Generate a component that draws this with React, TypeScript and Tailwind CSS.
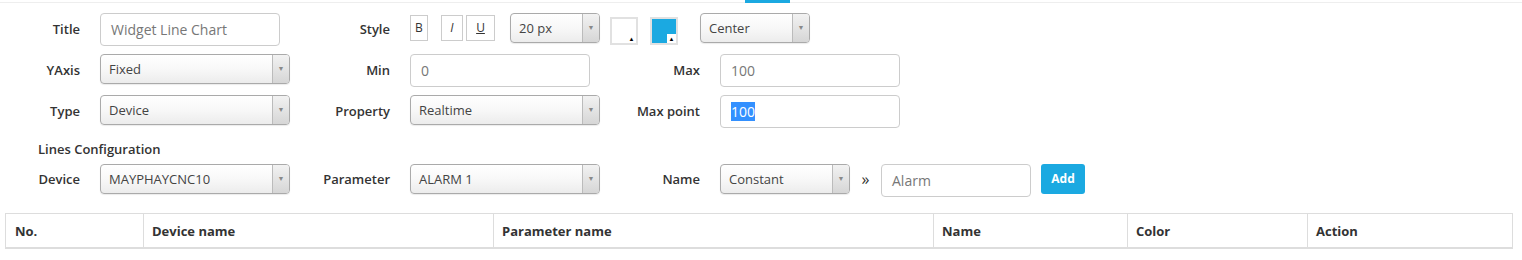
import React from 'react';

const Label = ({ children, w = 'w-[80px]' }: { children: React.ReactNode; w?: string }) => (
  <div className={`${w} shrink-0 text-right font-semibold leading-[33px] text-[#333]`}>{children}</div>
);

const Select = ({ text, w }: { text: string; w: string }) => (
  <div
    className={`${w} h-[30px] shrink-0 flex rounded-[4px] border border-[#aaa] bg-linear-to-b from-white via-[#f8f8f8] to-[#ececec] shadow-[0_1px_1px_rgba(0,0,0,0.08)] overflow-hidden`}
  >
    <div className="flex-1 pl-[8px] leading-[29px] text-[13px] text-[#444] truncate">{text}</div>
    <div className="w-[17px] border-l border-[#bbb] bg-linear-to-b from-[#f2f2f2] to-[#d6d6d6] flex items-center justify-center">
      <span className="text-[7px] text-[#888]">▼</span>
    </div>
  </div>
);

const Input = ({ children, w }: { children: React.ReactNode; w: string }) => (
  <div className={`${w} h-[33px] shrink-0 rounded-[4px] border border-[#ccc] bg-white pl-[10px] leading-[31px] text-[14px] text-[#777]`}>
    {children}
  </div>
);

const ColorBox = ({ fill }: { fill: string }) => (
  <div className="w-[28px] h-[28px] border-2 border-[#e1e1e1] bg-white relative">
    <div className={`w-full h-full ${fill}`} />
    <div className="absolute right-0 bottom-0 w-[9px] h-[9px] bg-white flex items-end justify-center">
      <span className="text-[6px] leading-[7px] text-black">▲</span>
    </div>
  </div>
);

const columns = [
  { name: 'No.', w: 'w-[137px]', pad: 'pl-[9px]' },
  { name: 'Device name', w: 'w-[350px]', pad: 'pl-[8px]' },
  { name: 'Parameter name', w: 'w-[440px]', pad: 'pl-[8px]' },
  { name: 'Name', w: 'w-[194px]', pad: 'pl-[8px]' },
  { name: 'Color', w: 'w-[180px]', pad: 'pl-[8px]' },
  { name: 'Action', w: 'w-[204px]', pad: 'pl-[8px]' },
];

export default function App() {
  return (
    <div className="w-[1522px] h-[260px] bg-white font-['Open_Sans',sans-serif] text-[13px] text-[#333]">
      {/* tab strip */}
      <div className="h-[3px] border-b border-[#eee]">
        <div className="ml-[745px] w-[45px] h-[3px] bg-[#1ba9e1]" />
      </div>

      <div className="pt-[10px] flex flex-col gap-[8px]">
        {/* Title / Style */}
        <div className="flex items-start h-[33px]">
          <Label>Title</Label>
          <div className="ml-[20px]">
            <Input w="w-[180px]">Widget Line Chart</Input>
          </div>
          <Label w="w-[110px]">Style</Label>
          <div className="ml-[20px] flex items-center h-[30px]">
            <div className="w-[18px] h-[26px] border border-[#ccc] flex items-center justify-center text-[12px]">B</div>
            <div className="ml-[13px] w-[22px] h-[26px] border border-[#ccc] flex items-center justify-center text-[12px] italic">I</div>
            <div className="ml-[3px] w-[29px] h-[26px] border border-[#ccc] flex items-center justify-center text-[12px] underline">U</div>
            <div className="ml-[15px]">
              <Select text="20 px" w="w-[90px]" />
            </div>
            <div className="ml-[10px] mt-[5px]">
              <ColorBox fill="bg-white" />
            </div>
            <div className="ml-[12px] mt-[5px]">
              <ColorBox fill="bg-[#1ba9e1]" />
            </div>
            <div className="ml-[22px]">
              <Select text="Center" w="w-[110px]" />
            </div>
          </div>
        </div>

        {/* YAxis / Min / Max */}
        <div className="flex items-start h-[33px]">
          <Label>YAxis</Label>
          <div className="ml-[20px]">
            <Select text="Fixed" w="w-[190px]" />
          </div>
          <Label w="w-[100px]">Min</Label>
          <div className="ml-[20px]">
            <Input w="w-[180px]">0</Input>
          </div>
          <Label w="w-[110px]">Max</Label>
          <div className="ml-[20px]">
            <Input w="w-[180px]">100</Input>
          </div>
        </div>

        {/* Type / Property / Max point */}
        <div className="flex items-start h-[33px]">
          <Label>Type</Label>
          <div className="ml-[20px]">
            <Select text="Device" w="w-[190px]" />
          </div>
          <Label w="w-[100px]">Property</Label>
          <div className="ml-[20px]">
            <Select text="Realtime" w="w-[190px]" />
          </div>
          <Label w="w-[100px]">Max point</Label>
          <div className="ml-[20px]">
            <Input w="w-[180px]">
              <span className="bg-[#3390ff] text-white">100</span>
            </Input>
          </div>
        </div>
      </div>

      <div className="mt-[12px] pl-[38px] h-[18px] leading-[18px] font-semibold">Lines Configuration</div>

      {/* Device / Parameter / Name */}
      <div className="mt-[6px] flex items-start h-[33px]">
        <div className="w-[80px] shrink-0 text-right font-semibold leading-[30px]">Device</div>
        <div className="ml-[20px]">
          <Select text="MAYPHAYCNC10" w="w-[190px]" />
        </div>
        <div className="w-[100px] shrink-0 text-right font-semibold leading-[30px]">Parameter</div>
        <div className="ml-[20px]">
          <Select text="ALARM 1" w="w-[190px]" />
        </div>
        <div className="w-[100px] shrink-0 text-right font-semibold leading-[30px]">Name</div>
        <div className="ml-[20px]">
          <Select text="Constant" w="w-[130px]" />
        </div>
        <div className="w-[31px] text-center leading-[30px] text-[16px]">»</div>
        <Input w="w-[150px]">Alarm</Input>
        <button className="ml-[10px] w-[44px] h-[30px] rounded-[3px] bg-[#1ba9e1] text-white text-[12px] font-bold">
          Add
        </button>
      </div>

      {/* table */}
      <div className="mt-[16px] ml-[5px] w-[1508px] flex border border-b-2 border-[#ddd]">
        {columns.map((c, i) => (
          <div
            key={c.name}
            className={`${c.w} ${c.pad} h-[33px] leading-[34px] font-bold text-[#333] ${i > 0 ? 'border-l border-[#ddd]' : ''}`}
          >
            {c.name}
          </div>
        ))}
      </div>
    </div>
  );
}
